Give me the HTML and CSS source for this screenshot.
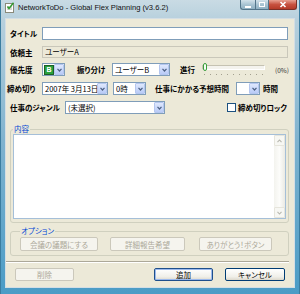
FILE: index.html
```html
<!DOCTYPE html>
<html lang="ja">
<head>
    <meta charset="UTF-8">
    <title>NetworkToDo - Global Flex Planning (v3.6.2)</title>
    <link rel="stylesheet" href="styles.css">
</head>
<body>
    <div class="window">
        <div class="titlebar">
            <svg class="app-icon" width="11" height="11" viewBox="0 0 11 11">
                <rect x="1.5" y="1.5" width="8" height="9" fill="#fff" stroke="#8a8a7a"/>
                <line x1="3" y1="5" x2="8" y2="5" stroke="#b0b0a0"/>
                <line x1="3" y1="7" x2="8" y2="7" stroke="#b0b0a0"/>
                <path d="M3.5 4.5 L5 6.5 L9.5 0.8" fill="none" stroke="#2f9a2f" stroke-width="1.4"/>
            </svg>
            <span class="title-text">NetworkToDo - Global Flex Planning (v3.6.2)</span>
            <div class="caption-buttons">
                <div class="cap cap-min">
                    <svg width="8" height="6" viewBox="0 0 8 6"><rect x="1" y="4" width="6" height="2" fill="#fff"/></svg>
                </div>
                <div class="cap cap-max">
                    <svg width="8" height="7" viewBox="0 0 8 7"><rect x="1.5" y="1.5" width="5" height="4" fill="none" stroke="#fff"/></svg>
                </div>
                <div class="cap cap-close">
                    <svg width="8" height="7" viewBox="0 0 8 7"><path d="M1.5 1 L6.5 6 M6.5 1 L1.5 6" stroke="#fff" stroke-width="1.6"/></svg>
                </div>
            </div>
        </div>

        <div class="client">
            <div class="row row-1">
                <span class="lbl lbl-title">タイトル</span>
                <div class="textbox grow"></div>
            </div>

            <div class="row row-2">
                <span class="lbl lbl-title">依頼主</span>
                <div class="readonly grow">ユーザーA</div>
            </div>

            <div class="row row-3">
                <span class="lbl lbl-title">優先度</span>
                <div class="combo combo-prio">
                    <span class="prio-icon">B</span>
                    <span class="drop"><svg width="5" height="4" viewBox="0 0 5 4"><path d="M0.5 0.8 L2.5 3 L4.5 0.8" fill="none" stroke="#4d6185" stroke-width="1.2"/></svg></span>
                </div>
                <span class="lbl lbl-assign">振り分け</span>
                <div class="combo combo-user">
                    <span class="combo-text">ユーザーB</span>
                    <span class="drop"><svg width="5" height="4" viewBox="0 0 5 4"><path d="M0.5 0.8 L2.5 3 L4.5 0.8" fill="none" stroke="#4d6185" stroke-width="1.2"/></svg></span>
                </div>
                <span class="lbl lbl-progress">進行</span>
                <div class="slider">
                    <div class="track"></div>
                    <div class="thumb"></div>
                    <div class="ticks">
                        <i></i><i></i><i></i><i></i><i></i><i></i><i></i><i></i><i></i><i></i><i></i>
                    </div>
                </div>
                <span class="percent">(0%)</span>
            </div>

            <div class="row row-4">
                <span class="lbl lbl-deadline">締め切り</span>
                <div class="combo combo-date">
                    <span class="combo-text">2007年 3月13日</span>
                    <span class="drop"><svg width="5" height="4" viewBox="0 0 5 4"><path d="M0.5 0.8 L2.5 3 L4.5 0.8" fill="none" stroke="#4d6185" stroke-width="1.2"/></svg></span>
                </div>
                <div class="combo combo-hour">
                    <span class="combo-text">0時</span>
                    <span class="drop"><svg width="5" height="4" viewBox="0 0 5 4"><path d="M0.5 0.8 L2.5 3 L4.5 0.8" fill="none" stroke="#4d6185" stroke-width="1.2"/></svg></span>
                </div>
                <span class="lbl lbl-estimate">仕事にかかる予想時間</span>
                <div class="combo combo-time">
                    <span class="combo-text"></span>
                    <span class="drop"><svg width="5" height="4" viewBox="0 0 5 4"><path d="M0.5 0.8 L2.5 3 L4.5 0.8" fill="none" stroke="#4d6185" stroke-width="1.2"/></svg></span>
                </div>
                <span class="lbl lbl-hours">時間</span>
            </div>

            <div class="row row-5">
                <span class="lbl lbl-genre">仕事のジャンル</span>
                <div class="combo combo-genre">
                    <span class="combo-text">(未選択)</span>
                    <span class="drop"><svg width="5" height="4" viewBox="0 0 5 4"><path d="M0.5 0.8 L2.5 3 L4.5 0.8" fill="none" stroke="#4d6185" stroke-width="1.2"/></svg></span>
                </div>
                <span class="checkbox"></span>
                <span class="lbl lbl-lock">締め切りロック</span>
            </div>

            <fieldset class="group group-content">
                <legend>内容</legend>
                <div class="memo">
                    <div class="memo-text"></div>
                    <div class="scrollbar">
                        <span class="sb-btn"><svg width="5" height="4" viewBox="0 0 5 4"><path d="M0.5 3.2 L2.5 1 L4.5 3.2" fill="none" stroke="#b8b8b0" stroke-width="1.1"/></svg></span>
                        <span class="sb-track"></span>
                        <span class="sb-btn"><svg width="5" height="4" viewBox="0 0 5 4"><path d="M0.5 0.8 L2.5 3 L4.5 0.8" fill="none" stroke="#b8b8b0" stroke-width="1.1"/></svg></span>
                    </div>
                </div>
            </fieldset>

            <fieldset class="group group-options">
                <legend>オプション</legend>
                <div class="option-buttons">
                    <span class="btn disabled btn-agenda">会議の議題にする</span>
                    <span class="btn disabled btn-report">詳細報告希望</span>
                    <span class="btn disabled btn-thanks">ありがとう！ボタン</span>
                </div>
            </fieldset>

            <div class="separator"></div>

            <div class="footer-buttons">
                <span class="btn disabled btn-delete">削除</span>
                <span class="btn default btn-add">追加</span>
                <span class="btn btn-cancel">キャンセル</span>
            </div>
        </div>
    </div>
</body>
</html>
```

FILE: styles.css
```css
* {
    box-sizing: border-box;
}

body {
    margin: 0;
    font-family: "Noto Sans CJK JP", "Noto Sans", sans-serif;
    font-size: 7.5px;
    font-feature-settings: "palt";
    color: #000;
}

.window {
    width: 300px;
    height: 294px;
    display: flex;
    flex-direction: column;
    background: linear-gradient(#c9dbe4 0, #b7d0dd 20px, #7fb3cf 140px, #4b9cc6 294px);
    border-left: 1px solid #3b7da0;
    border-right: 1px solid #3b7da0;
    overflow: hidden;
}

/* title bar */
.titlebar {
    height: 18px;
    flex: none;
    display: flex;
    align-items: flex-start;
}

.app-icon {
    margin: 2px 0 0 3px;
}

.title-text {
    margin-left: 3px;
    font-family: "Liberation Sans", sans-serif;
    font-size: 7.6px;
    line-height: 15px;
    color: #111;
}

.caption-buttons {
    margin-left: auto;
    margin-right: 2px;
    display: flex;
    height: 10px;
}

.cap {
    height: 10px;
    display: flex;
    align-items: center;
    justify-content: center;
    border: 1px solid #53758a;
    border-top: none;
}

.cap-min {
    width: 15px;
    border-radius: 0 0 0 3px;
    background: linear-gradient(#d2e2ea, #a9c4d3 50%, #8fb0c2);
    border-right: none;
}

.cap-max {
    width: 14px;
    background: linear-gradient(#d2e2ea, #a9c4d3 50%, #8fb0c2);
}

.cap-close {
    width: 28px;
    border-left: none;
    border-color: #7a2f26;
    border-radius: 0 0 3px 0;
    background: linear-gradient(#e8a192, #c7513f 50%, #b43a28);
}

/* client area */
.client {
    flex: 1;
    margin: 0 4px 6px 4px;
    background-color: #ece9d8;
    border: 1px solid #d4dee4;
    padding: 8px 5px 0 4px;
    display: flex;
    flex-direction: column;
}

.row {
    display: flex;
    align-items: center;
    height: 13px;
    flex: none;
}

.row-2 {
    margin-top: 6px;
    height: 12px;
}

.row-3 {
    margin-top: 5px;
}

.row-4,
.row-5 {
    margin-top: 6px;
}

.lbl {
    font-weight: 700;
    white-space: nowrap;
}

.lbl-title {
    width: 32px;
    flex: none;
}

.grow {
    flex: 1;
    margin-right: 1px;
}

.textbox {
    height: 13px;
    background: #fff;
    border: 1px solid #7f9db9;
}

.readonly {
    height: 12px;
    background: #ece9d8;
    border: 1px solid #c9c7ba;
    padding-left: 2px;
    line-height: 10px;
}

/* combos */
.combo {
    height: 13px;
    flex: none;
    display: flex;
    align-items: center;
    background: #fff;
    border: 1px solid #7f9db9;
}

.combo-text {
    flex: 1;
    padding-left: 2px;
    line-height: 11px;
    white-space: nowrap;
    overflow: hidden;
}

.drop {
    width: 10px;
    height: 11px;
    flex: none;
    display: flex;
    align-items: center;
    justify-content: center;
    background: linear-gradient(#dfe8fd, #b9cbf7);
    border: 1px solid #b4c6ef;
    border-radius: 1px;
}

.combo-prio {
    width: 23px;
    padding-left: 1px;
    justify-content: space-between;
}

.prio-icon {
    width: 10px;
    height: 10px;
    background: #28a13c;
    border: 1px solid #1d5e28;
    color: #fff;
    font-family: "Liberation Sans", sans-serif;
    font-weight: 700;
    font-size: 7px;
    line-height: 8px;
    text-align: center;
}

.lbl-assign {
    margin-left: 12px;
    width: 35px;
}

.combo-user {
    width: 58px;
}

.lbl-progress {
    margin-left: 10px;
    width: 22px;
}

.slider {
    position: relative;
    width: 63px;
    height: 13px;
    flex: none;
}

.track {
    margin-top: 2px;
    height: 5px;
    background: #f4f3ee;
    border: 1px solid #c5c2b2;
    border-bottom-color: #fff;
    border-right-color: #fff;
}

.thumb {
    position: absolute;
    left: 1px;
    top: 0;
    width: 4px;
    height: 8px;
    border: 1px solid #3c9e3c;
    border-radius: 2px;
    background: #f4fff2;
}

.ticks {
    margin-top: 4px;
    display: flex;
    justify-content: space-between;
    padding: 0 2px;
}

.ticks i {
    width: 1px;
    height: 1px;
    background: #a3a08f;
}

.percent {
    margin-left: 10px;
    font-size: 6.5px;
    color: #333;
}

.lbl-deadline {
    width: 35px;
    margin-left: -3px;
    flex: none;
}

.combo-date {
    width: 66px;
}

.combo-hour {
    width: 33px;
    margin-left: 5px;
}

.lbl-estimate {
    margin-left: 9px;
    width: 81px;
}

.combo-time {
    width: 24px;
}

.lbl-hours {
    margin-left: 3px;
}

.lbl-genre {
    width: 55px;
    flex: none;
}

.combo-genre {
    width: 100px;
}

.checkbox {
    margin-left: 62px;
    width: 9px;
    height: 9px;
    flex: none;
    background: #fff;
    border: 1px solid #1c5180;
}

.lbl-lock {
    margin-left: 2px;
}

/* group boxes */
.group {
    margin: 0;
    padding: 0 2px 3px 2px;
    border: 1px solid #d0d0bf;
    border-radius: 3px;
    min-width: 0;
    flex: none;
}

.group legend {
    padding: 0 1px;
    margin-left: 0;
    color: #0046d5;
    line-height: 10px;
}

.group-content {
    margin-top: 10px;
}

.memo {
    height: 85px;
    display: flex;
    background: #fff;
    border: 1px solid #a5bfd8;
}

.memo-text {
    flex: 1;
}

.scrollbar {
    width: 11px;
    display: flex;
    flex-direction: column;
    background: linear-gradient(to right, #f3f3ee, #fcfcfa 50%, #ebeae3);
}

.sb-btn {
    height: 11px;
    display: flex;
    align-items: center;
    justify-content: center;
    background: #f7f7f3;
    border: 1px solid #e6e5dc;
    border-radius: 1px;
}

.sb-track {
    flex: 1;
}

.group-options {
    margin-top: 3px;
    padding: 1px 2px 4px 9px;
}

.option-buttons {
    display: flex;
}

/* buttons */
.btn {
    height: 14px;
    flex: none;
    display: flex;
    align-items: center;
    justify-content: center;
    border: 1px solid #003c74;
    border-radius: 2px;
    background: linear-gradient(#ffffff, #f0efe9 70%, #dcd8cc);
    white-space: nowrap;
}

.btn.disabled {
    color: #aca899;
    border-color: #cbc8bb;
    background: #f5f4ee;
}

.btn.default {
    border-color: #1e4f8c;
    box-shadow: inset 0 0 0 1px #9cb9ec;
}

.btn-agenda {
    width: 78px;
}

.btn-report {
    width: 75px;
    margin-left: 12px;
}

.btn-thanks {
    width: 73px;
    margin-left: 14px;
}

.separator {
    margin: 5px 0 0 -4px;
    height: 2px;
    flex: none;
    border-top: 1px solid #aca899;
    border-bottom: 1px solid #fff;
}

.footer-buttons {
    margin-top: 5px;
    display: flex;
}

.footer-buttons .btn {
    height: 13px;
}

.btn-delete {
    width: 59px;
    margin-left: 5px;
}

.btn-add {
    width: 59px;
    margin-left: 80px;
}

.btn-cancel {
    width: 60px;
    margin-left: 12px;
}
```
